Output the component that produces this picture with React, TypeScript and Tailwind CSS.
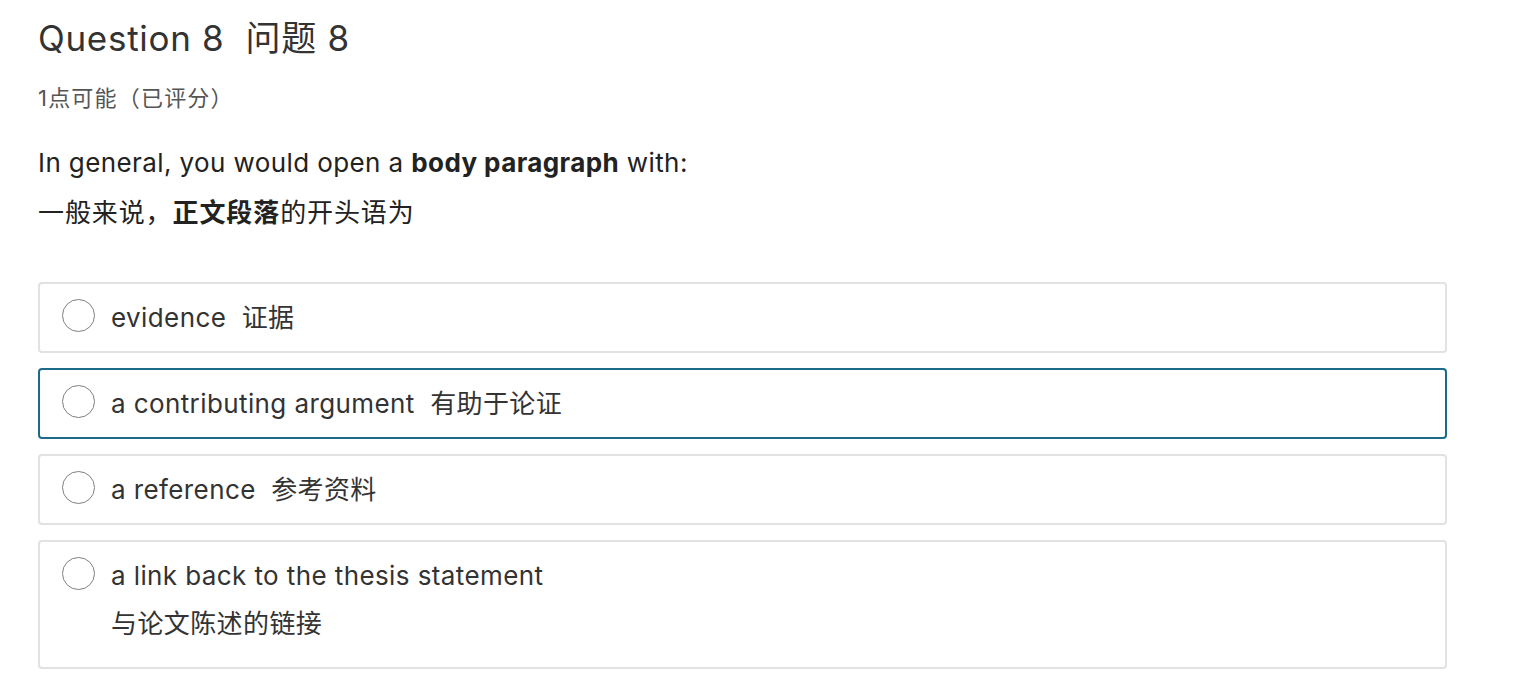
import { useState } from 'react';

const options = [
  { id: 'a', en: 'evidence', zh: '证据' },
  { id: 'b', en: 'a contributing argument', zh: '有助于论证' },
  { id: 'c', en: 'a reference', zh: '参考资料' },
  { id: 'd', en: 'a link back to the thesis statement', zh: '与论文陈述的链接', wrap: true },
];

export default function App() {
  const [focused] = useState('b');

  return (
    <div
      className="min-h-screen bg-white pl-[38px] pr-[88px] pt-[16px] text-[#2d3b45]"
      style={{ fontFamily: 'Inter, "Noto Sans CJK SC", sans-serif' }}
    >
      {/* Header */}
      <h2 className="text-[35px] leading-[44px] tracking-[0.7px] text-[#333]">
        Question 8&nbsp;&nbsp;问题 8
      </h2>
      <p className="mt-[25px] text-[22px] leading-[26px] tracking-[1.2px] text-[#555]">1点可能（已评分）</p>

      {/* Question text */}
      <div className="mt-[35px] text-[26px] tracking-[0.4px] text-[#222]">
        <p className="leading-[34px]">
          In general, you would open a <strong className="font-bold">body paragraph</strong> with:
        </p>
        <p className="mt-[16px] leading-[34px] tracking-[0.9px]">
          一般来说，<strong className="font-bold">正文段落</strong>的开头语为
        </p>
      </div>

      {/* Answers */}
      <div className="mt-[52px] flex flex-col gap-[15px]">
        {options.map((o) => (
          <label
            key={o.id}
            className={`flex items-start gap-[16px] rounded-[4px] border-2 bg-white pl-[22px] pr-4 pt-[17px] ${
              focused === o.id ? 'border-[#1b6a8a]' : 'border-[#e2e2e2]'
            } ${o.wrap ? 'pb-[26px]' : 'pb-[16px]'}`}
          >
            <span className="-mt-[2px] h-[33px] w-[33px] shrink-0 rounded-full border-[1.5px] border-[#808080] bg-white" />
            <span className="text-[26px] leading-[34px] tracking-[0.4px] text-[#333]">
              {o.wrap ? (
                <>
                  <span className="block">{o.en}</span>
                  <span className="mt-[14px] block">{o.zh}</span>
                </>
              ) : (
                <>
                  {o.en}&nbsp;&nbsp;{o.zh}
                </>
              )}
            </span>
          </label>
        ))}
      </div>
    </div>
  );
}
